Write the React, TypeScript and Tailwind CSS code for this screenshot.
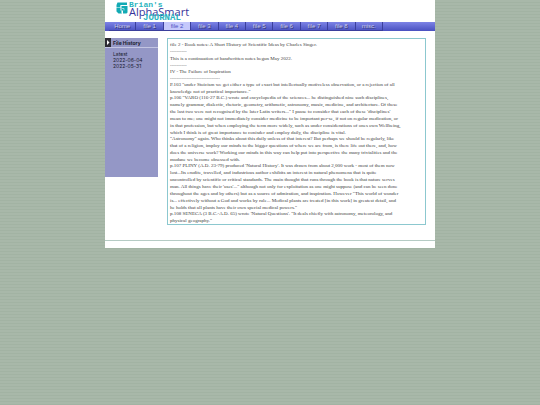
import { useState } from 'react'

const tabs = ['Home', 'file 1', 'file 2', 'file 3', 'file 4', 'file 5', 'file 6', 'file 7', 'file 8', 'misc.']

const history = ['Latest', '2022-06-04', '2022-05-31']

const notes = [
  `file 2 - Book notes: A Short History of Scientific Ideas by Charles Singer.
----------
This is a continuation of handwritten notes begun May 2022.
----------`,
  `IV - The Failure of Inspiration
------------------------------`,
  `P.103 "under Stoicism we get either a type of exact but intellectually motiveless observation, or a rejection of all
knowledge not of practical importance."`,
  `p.106 "VARO (116-27 B.C.) wrote and encyclopedia of the sciences... he distinguished nine such disciplines,
namely grammar, dialectic, rhetoric, geometry, arithmetic, astronomy, music, medicine, and architecture. Of these
the last two were not recognised by the later Latin writers..." I pause to consider that each of these 'disciplines'
mean to me; one might not immediately consider medicine to be important per-se, if not on regular medication, or
in that profession, but when employing the term more widely, such as under considerations of ones own Wellbeing,
which I think is of great importance to conisder and employ daily, the discipline is vital.`,
  `"Astronomy" again. Who thinks about this daily unless of that interest? But perhaps we should be regularly, like
that of a religion, imploy our minds to the bigger questions of where we are from, is there life out there, and, how
does the universe work? Working our minds in this way can help put into perspective the many trivialities and the
mudane we become obsessed with.`,
  `p.107 PLINY (A.D. 23-79) produced 'Natural History'. It was drawn from about 2,000 work - most of them now
lost...Its erudite, travelled, and industrious author exhibits an interest in natural phenomena that is quite
uncontrolled by scientific or critical standards. The main thought that runs through the book is that nature serves
man. All things have their 'uses'..." although not only for exploitation as one might suppose (and can be seen done
throughout the ages and by others) but as a source of admiration, and inspiration. However "This world of wonder
is... effectively without a God and works by rule... Medical plants are treated [in this work] in greatest detail, and
he holds that all plants have their own special medical powers."`,
  `p.108 SENECA (3 B.C.-A.D. 65) wrote 'Natural Questions'. "It deals chiefly with astronomy, meteorology, and
physical geography."`,
]

function Logo() {
  return (
    <div className="flex h-[22px] items-start gap-px pt-px pl-[11px]">
      <svg viewBox="0 0 24 24" className="mt-px size-3 shrink-0">
        <path d="M3 1h19v5H9v4H1V6z" fill="#12aab4" />
        <path d="M1 11h8v6h3v6H5l-4-4z" fill="#12aab4" />
        <path d="M11 8h12v13l-2 2h-7v-6h-3z" fill="#12aab4" />
        <path d="M9 7v3M12 13h4v4M11 17v6" fill="none" stroke="#d7f1f2" strokeWidth="1.3" />
      </svg>
      <div className="flex flex-col">
        <span className="h-1.5 font-['Liberation_Mono',monospace] text-[8px] leading-[8px] font-bold text-[#2cb5c0]">Brian's</span>
        <span className="h-2 font-['Open_Sans',sans-serif] text-[11px] leading-[10px] font-medium text-[#37349a]">AlphaSmart</span>
        <span className="pl-[14px] font-['Liberation_Mono',monospace] text-[9px] leading-[7px] font-bold text-[#2cb5c0]">JOURNAL</span>
      </div>
    </div>
  )
}

export default function App() {
  const [active, setActive] = useState('file 2')

  return (
    <div className="min-h-screen bg-[#a5b5a5] bg-[repeating-linear-gradient(to_bottom,#a8b8a9_0px,#a8b8a9_2px,#a2b3a3_2px,#a2b3a3_3px)]">
      <div className="mx-auto w-full max-w-[330px] bg-white">
        <header>
          <Logo />
          <nav className="h-[9px] bg-linear-to-b from-[#7d83e6] to-[#4a50c0] pl-1">
            <div className="flex h-full w-[84%]">
              {tabs.map((tab) => (
                <button
                  key={tab}
                  onClick={() => setActive(tab)}
                  className={`flex-1 border-r border-b border-[#3b3f9c] font-['Liberation_Sans',sans-serif] text-[6px] leading-[8px] ${
                    active === tab
                      ? 'bg-[#c5c8fb] text-[#4a4fc4]'
                      : 'text-[#c9cbea] text-shadow-[1px_1px_0_#33366e]'
                  }`}
                >
                  {tab}
                </button>
              ))}
            </div>
          </nav>
        </header>

        <main className="flex items-start gap-[9px] pt-[7px] pr-[9px] pb-[15px]">
          <aside className="h-[139px] w-[53px] shrink-0 bg-[#9497c6] font-['Inter',sans-serif] text-[5px] text-[#1c1c30]">
            <div className="flex h-[10px] items-stretch border-b border-[#c3c5e2]">
              <svg viewBox="0 0 6 9" className="h-[9px] w-1.5 bg-[#2b2b33]">
                <path d="M2 2l2.5 2.5L2 7z" fill="#fff" />
              </svg>
              <h2 className="pl-0.5 leading-[10px] font-bold">File History</h2>
            </div>
            <ul className="pt-[3px] pl-2 leading-[6px]">
              {history.map((item) => (
                <li key={item}>
                  <a href="#">{item}</a>
                </li>
              ))}
            </ul>
          </aside>

          <article className="min-w-0 flex-1 border border-[#8cc8cf] px-0.5 pt-0.5 pb-px font-['Liberation_Serif',serif] text-[5px] leading-[7px] text-[#3c3c3c]">
            {notes.map((note) => (
              <p key={note} className="-mb-px whitespace-pre">
                {note}
              </p>
            ))}
          </article>
        </main>

        <footer className="h-2 border-t border-[#b5cbc4]" />
      </div>
    </div>
  )
}
